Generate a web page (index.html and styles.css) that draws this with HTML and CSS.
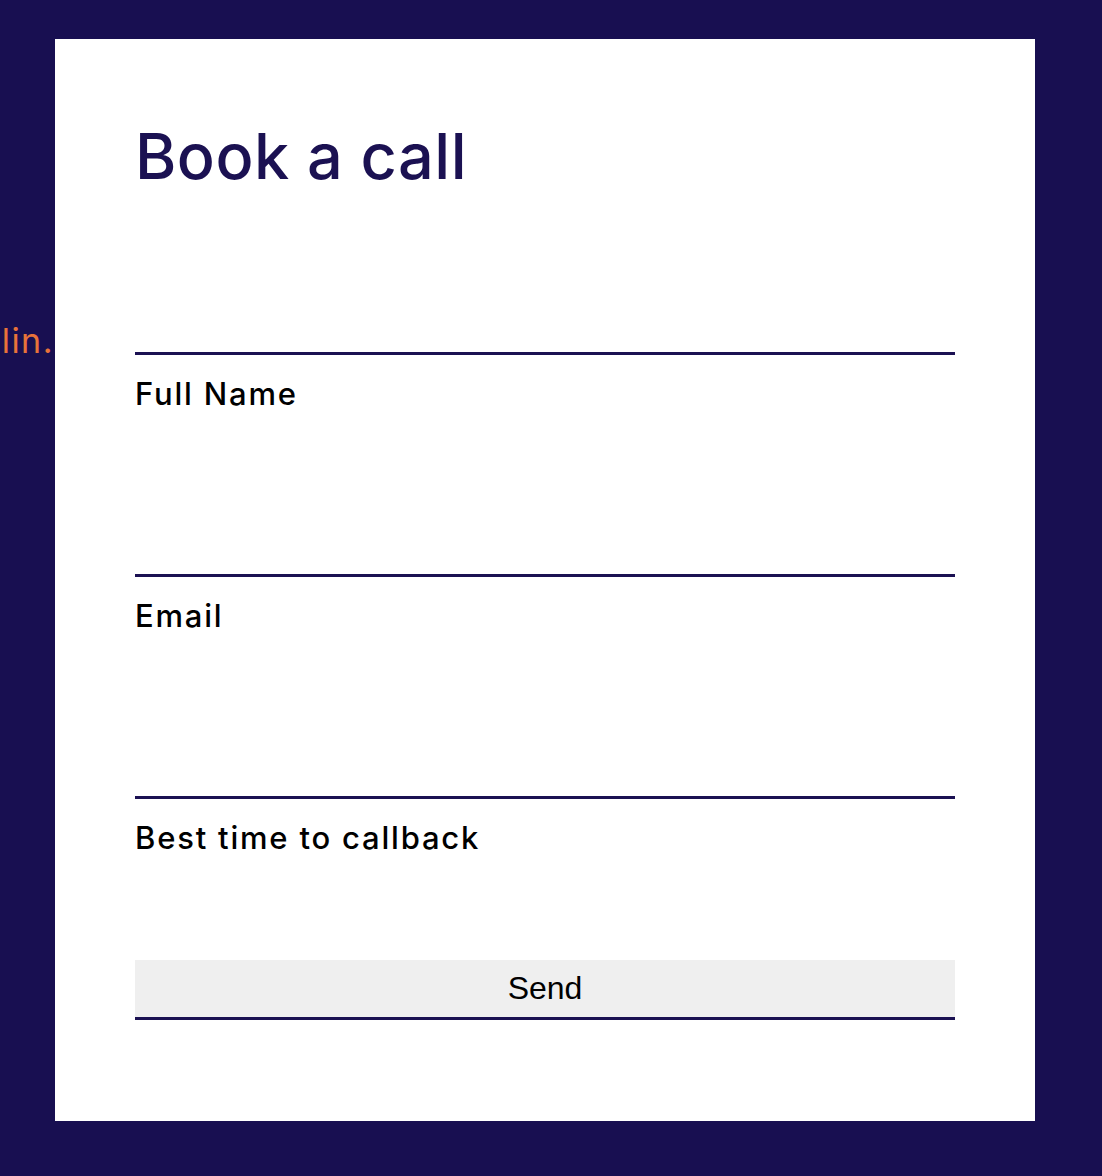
FILE: index.html
```html
<!DOCTYPE html>
<html lang="en">
<head>
<meta charset="utf-8">
<title>Book a call</title>
<link rel="stylesheet" href="styles.css">
</head>
<body>
<div class="page">
  <p class="aside-text">Dublin.</p>
  <section class="card">
    <h1 class="title">Book a call</h1>
    <form class="form">
      <div class="field">
        <input class="input" type="text" id="name">
        <label class="label" for="name">Full Name</label>
      </div>
      <div class="field">
        <input class="input" type="email" id="email">
        <label class="label" for="email">Email</label>
      </div>
      <div class="field">
        <input class="input" type="text" id="time">
        <label class="label" for="time">Best time to callback</label>
      </div>
      <button class="send" type="button">Send</button>
    </form>
  </section>
</div>
</body>
</html>
```
FILE: styles.css
```css
html, body {
  margin: 0;
  padding: 0;
}
body {
  background: #180f51;
  font-family: "Inter", "DejaVu Sans", sans-serif;
  overflow: hidden;
}
.page {
  position: relative;
  height: 1176px;
  padding: 39px 0 0 55px;
  box-sizing: border-box;
}
.aside-text {
  position: absolute;
  margin: 0;
  right: calc(100% - 54px);
  top: 321px;
  font-size: 34px;
  line-height: 40px;
  letter-spacing: 1.5px;
  color: #e8733a;
  white-space: nowrap;
}
.card {
  position: relative;
  width: 980px;
  height: 1082px;
  box-sizing: border-box;
  background: #fff;
  padding: 77px 80px 0 80px;
}
.title {
  margin: 0;
  font-weight: 500;
  font-size: 63px;
  line-height: 80px;
  color: #1b1152;
  letter-spacing: 0.5px;
}
.form {
  display: flex;
  flex-direction: column;
  margin-top: 56px;
}
.field {
  display: flex;
  flex-direction: column;
}
.input {
  display: block;
  height: 100px;
  border: none;
  border-bottom: 3px solid #1b1152;
  padding: 0;
  margin: 0;
  outline: none;
  background: transparent;
  font-size: 28px;
}
.field + .field .input {
  height: 163px;
}
.label {
  padding-top: 22px;
  font-size: 31px;
  line-height: 34px;
  letter-spacing: 1.8px;
  color: #000;
  font-weight: 500;
}
.send {
  margin-top: 105px;
  height: 60px;
  border: none;
  border-bottom: 3px solid #1b1152;
  background: #efefef;
  font-family: "Liberation Sans", Arial, sans-serif;
  font-size: 32px;
  color: #000;
  padding: 0;
}
```
